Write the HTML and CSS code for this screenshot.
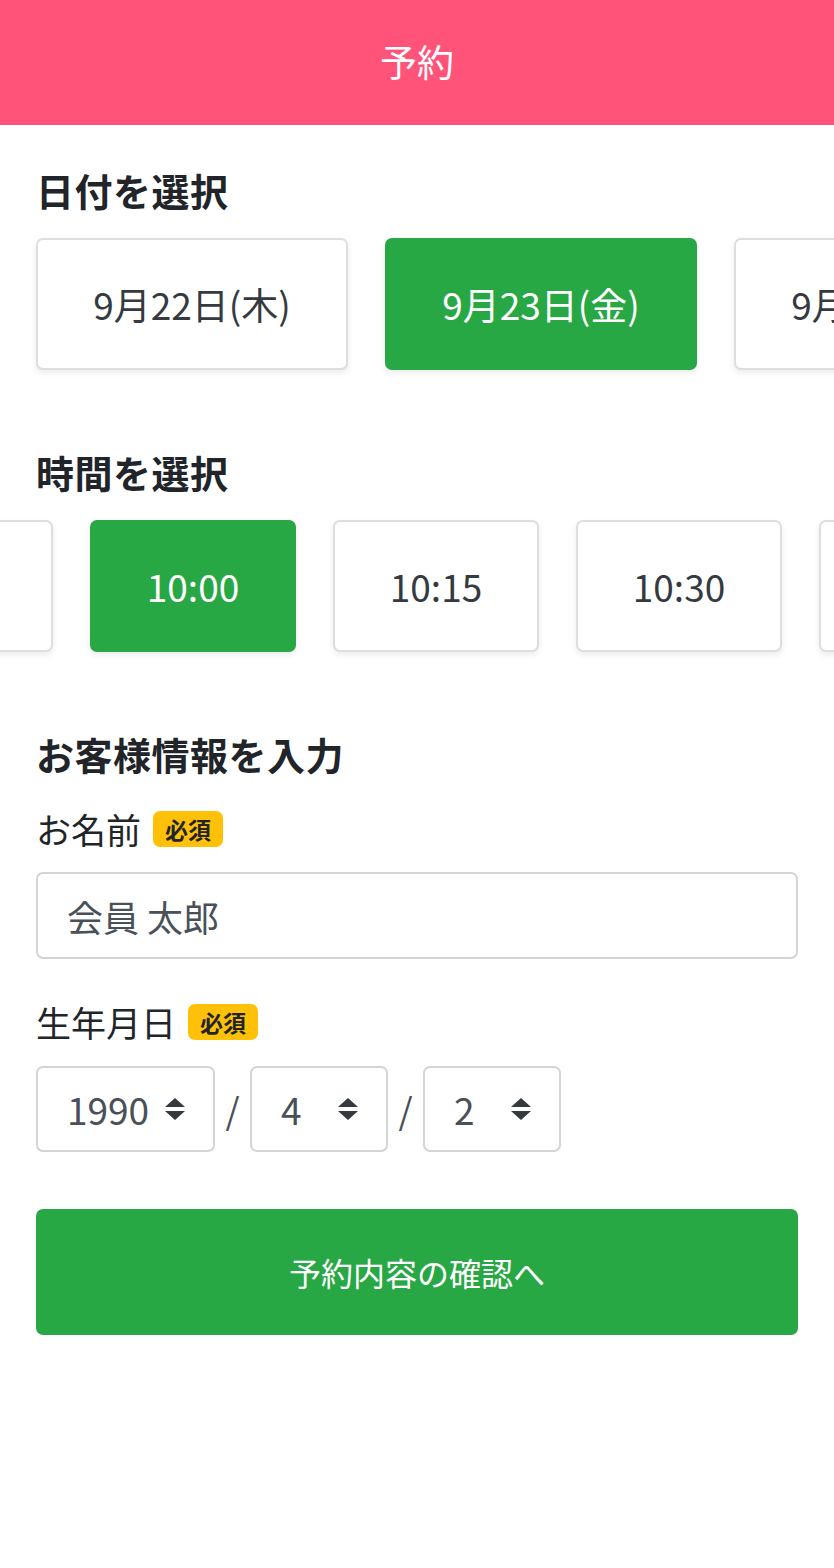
FILE: index.html
```html
<!DOCTYPE html>
<html lang="ja">
    <head>
        <meta charset="utf-8">
        <title>予約</title>
        <link rel="stylesheet" href="styles.css">
    </head>
    <body>
        <div class="topbar">予約</div>

        <div class="page">
            <h2 class="heading heading-first">日付を選択</h2>
            <div class="slider">
                <div class="track">
                    <div class="pick date">9月22日(木)</div>
                    <div class="pick date active">9月23日(金)</div>
                    <div class="pick date">9月24日(土)</div>
                </div>
            </div>

            <h2 class="heading">時間を選択</h2>
            <div class="slider slider-time">
                <div class="track scrolled">
                    <div class="pick time">9:45</div>
                    <div class="pick time active">10:00</div>
                    <div class="pick time">10:15</div>
                    <div class="pick time">10:30</div>
                    <div class="pick time">10:45</div>
                </div>
            </div>

            <h2 class="heading">お客様情報を入力</h2>
            <div class="field">
                <label class="label">お名前 <span class="badge">必須</span></label>
                <div class="input">会員 太郎</div>
            </div>

            <div class="field field-birth">
                <label class="label">生年月日 <span class="badge">必須</span></label>
                <div class="birth">
                    <div class="select year">1990
                        <svg class="arrows" width="20" height="22" viewBox="0 0 20 22"><path d="M10 0 L20 9 L0 9 Z M10 22 L20 13 L0 13 Z" fill="#343a40"/></svg>
                    </div>
                    <span class="slash">/</span>
                    <div class="select">4
                        <svg class="arrows" width="20" height="22" viewBox="0 0 20 22"><path d="M10 0 L20 9 L0 9 Z M10 22 L20 13 L0 13 Z" fill="#343a40"/></svg>
                    </div>
                    <span class="slash">/</span>
                    <div class="select">2
                        <svg class="arrows" width="20" height="22" viewBox="0 0 20 22"><path d="M10 0 L20 9 L0 9 Z M10 22 L20 13 L0 13 Z" fill="#343a40"/></svg>
                    </div>
                </div>
            </div>

            <button class="submit">予約内容の確認へ</button>
        </div>
    </body>
</html>
```

FILE: styles.css
```css
body {
    margin: 0;
    font-family: "Noto Sans CJK JP", "Noto Sans", sans-serif;
    color: #212529;
    background: #fff;
}
.topbar {
    height: 125px;
    background: #ff537a;
    color: #fff;
    font-size: 37px;
    line-height: 122px;
    text-align: center;
}
.page { padding: 0 36px; }

.heading {
    margin: 0;
    margin-top: 71px;
    font-size: 38px;
    line-height: 46px;
    font-weight: bold;
    letter-spacing: 0.5px;
}
.heading-first { margin-top: 42px; }

.slider {
    margin: 17px -36px 0;
    padding: 8px 0 8px 36px;
    overflow: hidden;
}
.slider-time { margin-top: 17px; }
.track { display: flex; gap: 37px; }
.track.scrolled { margin-left: -189px; }

.pick {
    flex: none;
    box-sizing: border-box;
    height: 132px;
    border: 2px solid #dedede;
    border-radius: 7px;
    background: #fff;
    box-shadow: 0 3px 6px rgba(0,0,0,0.08);
    display: flex;
    align-items: center;
    justify-content: center;
    font-size: 37px;
    color: #343a40;
}
.pick.active {
    background: #28a745;
    border-color: #28a745;
    color: #fff;
}
.date { width: 312px; }
.time { width: 206px; }

.field { margin-top: 26px; }
.field-birth { margin-top: 37px; }
.label {
    display: flex;
    align-items: center;
    gap: 12px;
    font-size: 35px;
    line-height: 52px;
}
.badge {
    background: #ffc107;
    border-radius: 7px;
    font-size: 23px;
    font-weight: bold;
    line-height: 36px;
    padding: 0 12px;
    color: #212529;
}
.input {
    box-sizing: border-box;
    margin-top: 17px;
    height: 87px;
    border: 2px solid #d4d4d4;
    border-radius: 7px;
    padding-left: 29px;
    display: flex;
    align-items: center;
    font-size: 36px;
    color: #495057;
}

.birth {
    margin-top: 18px;
    display: flex;
    align-items: center;
}
.select {
    box-sizing: border-box;
    width: 138px;
    height: 86px;
    border: 2px solid #d4d4d4;
    border-radius: 7px;
    padding: 0 28px 0 29px;
    display: flex;
    align-items: center;
    justify-content: space-between;
    font-size: 37px;
    color: #495057;
}
.select.year { width: 179px; }
.slash {
    width: 35px;
    text-align: center;
    font-size: 36px;
    color: #495057;
}

.submit {
    display: block;
    width: 100%;
    height: 126px;
    margin-top: 57px;
    border: none;
    border-radius: 7px;
    background: #28a745;
    color: #fff;
    font-family: inherit;
    font-size: 32px;
}
```
